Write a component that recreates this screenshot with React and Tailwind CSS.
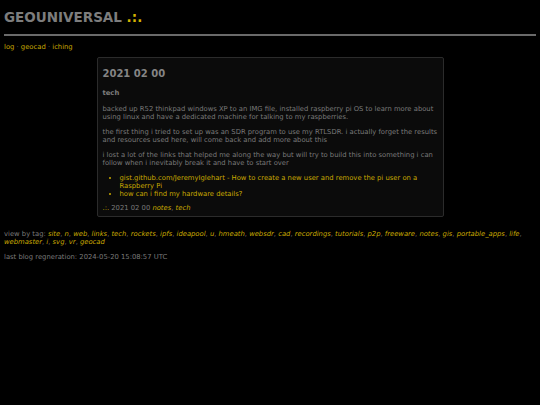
import React from 'react';

const tags = [
  'site', 'n', 'web', 'links', 'tech', 'rockets', 'ipfs', 'ideapool', 'u', 'hmeath',
  'websdr', 'cad', 'recordings', 'tutorials', 'p2p', 'freeware', 'notes', 'gis',
  'portable_apps', 'life', 'webmaster', 'i', 'svg', 'vr', 'geocad',
];

const links = [
  'gist.github.com/JeremyIglehart - How to create a new user and remove the pi user on a Raspberry Pi',
  'how can i find my hardware details?',
];

export default function App() {
  return (
    <div
      className="min-h-[405px] w-[540px] bg-black px-[4px] pt-[9px] text-[6.8px] leading-[8px] text-[#7a7a7a]"
      style={{ fontFamily: '"DejaVu Sans", Verdana, sans-serif' }}
    >
      {/* Header */}
      <h1 className="text-[13.5px] font-bold leading-[17px] text-[#7d7d7d]">
        GEOUNIVERSAL <span className="text-[#d4b000]">.:.</span>
      </h1>
      <div className="mt-[8px] h-[2px] bg-[#6a6a6a]" />

      {/* Nav */}
      <nav className="mt-[7px] text-[#c9a900]">
        log <span className="text-[#666]">·</span> geocad <span className="text-[#666]">·</span> iching
      </nav>

      {/* Post card */}
      <div className="mx-auto mt-[6px] w-[347px] rounded-[2px] border border-[#2b2b2b] bg-[#0b0b0b] px-[5px] pb-[4px] pt-[9px]">
        <h2 className="text-[10px] font-bold leading-[13px] text-[#858585]">2021 02 00</h2>
        <h3 className="mt-[9px] font-bold text-[#7d7d7d]">tech</h3>
        <p className="mt-[8px]">
          backed up R52 thinkpad windows XP to an IMG file, installed raspberry pi OS to learn more about using linux and have a dedicated machine for talking to my raspberries.
        </p>
        <p className="mt-[7px]">
          the first thing i tried to set up was an SDR program to use my RTLSDR. i actually forget the results and resources used here, will come back and add more about this
        </p>
        <p className="mt-[7px]">
          i lost a lot of the links that helped me along the way but will try to build this into something i can follow when i inevitably break it and have to start over
        </p>
        <ul className="mt-[7px] list-disc pl-[17px] text-[#c9a900] marker:text-[#c9a900]">
          {links.map((l) => (
            <li key={l}>{l}</li>
          ))}
        </ul>
        <div className="mt-[6px]">
          <span className="text-[#c9a900]">.:.</span> 2021 02 00{' '}
          <span className="italic text-[#c9a900]">notes</span>,{' '}
          <span className="italic text-[#c9a900]">tech</span>
        </div>
      </div>

      {/* Tags */}
      <div className="mt-[13px]">
        view by tag:{' '}
        {tags.map((t, i) => (
          <React.Fragment key={t}>
            <span className="italic text-[#c9a900]">{t}</span>
            {i < tags.length - 1 ? ', ' : ''}
          </React.Fragment>
        ))}
      </div>
      <div className="mt-[7px]">last blog regneration: 2024-05-20 15:08:57 UTC</div>
    </div>
  );
}
